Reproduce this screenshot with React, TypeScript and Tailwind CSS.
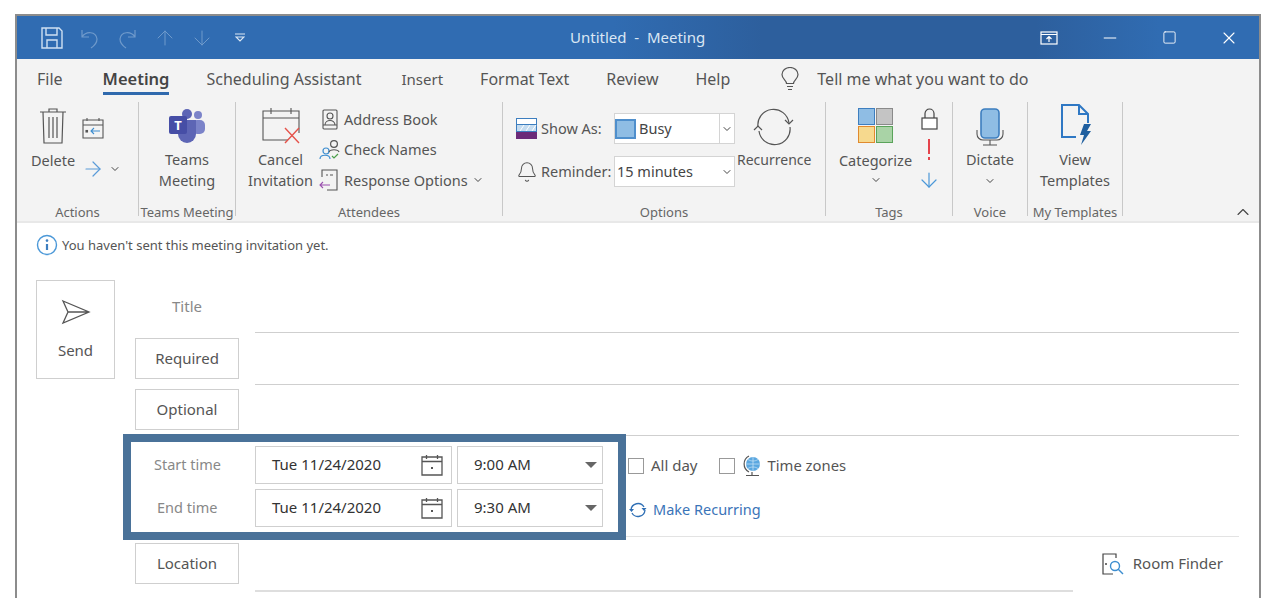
import { ChevronDown, ChevronUp, Bell, X, Minus, Square, ArrowUp, ArrowDown, ArrowRight } from 'lucide-react';

const font = 'font-["Noto_Sans","Liberation_Sans",sans-serif]';

function GroupLabel({ children }: { children: string }) {
  return <div className="absolute -bottom-[5px] left-0 right-0 text-center text-[13px] leading-[18px] text-[#666]">{children}</div>;
}

function SmallChevron({ className = '' }: { className?: string }) {
  return <ChevronDown className={`h-3 w-3 shrink-0 text-[#444] ${className}`} strokeWidth={2} />;
}

function Group({ width, label, children }: { width: string; label: string; children: React.ReactNode }) {
  return (
    <div className={`relative h-full shrink-0 border-r border-[#c8c8c8] ${width}`}>
      {children}
      <GroupLabel>{label}</GroupLabel>
    </div>
  );
}

function BoxButton({ children }: { children: string }) {
  return (
    <button className="flex h-[41px] w-[104px] shrink-0 items-center justify-center border border-[#cfcfcf] bg-white text-[15px] text-[#555]">
      {children}
    </button>
  );
}

function DateTime({ date, time }: { date: string; time: string }) {
  return (
    <div className="flex gap-[5px]">
      <div className="flex h-[38px] w-[197px] items-center justify-between border border-[#cfcfcf] pl-[16px] pr-[8px] text-[15px] text-[#333]">
        {date}
        <svg width="22" height="22" viewBox="0 0 22 22" fill="none" stroke="#555" strokeWidth="1.3">
          <path d="M1 3h20v18H1zM1 7.500h20M5.500 1v4M16.500 1v4" />
          <rect x="10" y="13" width="2" height="2" fill="#555" stroke="none" />
        </svg>
      </div>
      <div className="flex h-[38px] w-[146px] items-center justify-between border border-[#cfcfcf] pl-[16px] pr-[5px] text-[15px] text-[#333]">
        {time}
        <span className="h-0 w-0 border-x-[6px] border-t-[6px] border-x-transparent border-t-[#666]" />
      </div>
    </div>
  );
}

export default function App() {
  return (
    <div className={`${font} h-[610px] w-[1272px] overflow-hidden bg-white pt-[14px] pl-[15px] pr-[11px]`}>
      <div className="flex h-[584px] flex-col overflow-hidden border-x-2 border-t-2 border-[#8c8c8c]">
        {/* title bar */}
        <div className="relative flex h-[43px] shrink-0 items-center bg-[linear-gradient(90deg,#306cb2_0%,#306cb2_48%,#2d5f9d_60%,#2d5f9d_82%,#306cb2_92%)] pl-[24px] pr-[20px] text-white">
          <div className="flex items-center">
            <svg width="22" height="22" viewBox="0 0 22 22" fill="none" stroke="#cfe0f2" strokeWidth="1.4">
              <path d="M1 1h17l3 3v17H1z" /><path d="M5 1v7h11V1M6 21v-8h10v8" />
            </svg>
            <svg width="22" height="22" viewBox="0 0 22 22" fill="none" stroke="#6f9acb" strokeWidth="1.2" className="ml-[16px]">
              <path d="M3 3v7h7M3 10c4-6 14-6 15 2 0 4-3 7-6 9" />
            </svg>
            <svg width="22" height="22" viewBox="0 0 22 22" fill="none" stroke="#6f9acb" strokeWidth="1.2" className="ml-[15px]">
              <path d="M19 3v7h-7M19 10c-4-6-14-6-15 2 0 4 3 7 6 9" />
            </svg>
            <ArrowUp className="ml-[15px] h-6 w-6 text-[#6f9acb]" strokeWidth={1} />
            <ArrowDown className="ml-[13px] h-6 w-6 text-[#6f9acb]" strokeWidth={1} />
            <svg width="10" height="9" viewBox="0 0 10 9" className="ml-[21px]" fill="none" stroke="#dbe7f4" strokeWidth="1.2"><path d="M0 1h10M1 4h8L5 8z" /></svg>
          </div>
          <div className="absolute left-[553px] text-[15px] text-[#dbe7f4]">Untitled&nbsp; -&nbsp; Meeting</div>
          <div className="ml-auto flex items-center gap-[42px]">
            <svg width="18" height="14" viewBox="0 0 18 14" fill="none" stroke="#fff" strokeWidth="1.2"><rect x="1" y="1" width="16" height="12" /><path d="M1 3.500h16M9 11V6M6.500 8 9 5.500 11.500 8" /></svg>
            <Minus className="h-5 w-5" strokeWidth={1.2} />
            <Square className="h-[15px] w-[15px]" strokeWidth={1.4} />
            <X className="h-5 w-5" strokeWidth={1.3} />
          </div>
        </div>

        {/* tabs */}
        <div className="flex h-[43px] shrink-0 items-start gap-[37px] bg-[#f3f3f3] pl-[20px] pt-[8px] text-[16px] leading-[24px] text-[#555]">
          <span className="mr-[3px]">File</span>
          <span className="relative text-[16.500px] font-semibold text-[#444]">
            Meeting
            <span className="absolute -bottom-[4px] left-0 right-0 h-[3px] bg-[#2f69ad]" />
          </span>
          <span className="mr-[3px]">Scheduling Assistant</span>
          <span className="text-[15px]">Insert</span>
          <span>Format Text</span>
          <span>Review</span>
          <span>Help</span>
          <span className="flex items-center gap-[17px] pl-[13px]">
            <svg width="20" height="24" viewBox="0 0 20 24" fill="none" stroke="#555" strokeWidth="1.2">
              <path d="M6.500 16.500c0-3-4.500-4.500-4.500-9a8 7 0 0 1 16 0c0 4.500-4.500 6-4.500 9zM7 19.500h6M8 22.500h4" />
            </svg>
            Tell me what you want to do
          </span>
        </div>

        {/* ribbon */}
        <div className="flex h-[119px] shrink-0 bg-[#f3f3f3] pb-[5px] text-[14.500px] leading-[21px] text-[#555]">
          <Group width="w-[122px]" label="Actions">
            <div className="flex pl-[14px] pt-[5px]">
              <div className="flex flex-col items-center">
                <svg width="28" height="38" viewBox="0 0 28 38" fill="none" stroke="#555" strokeWidth="1.200"><path d="M1 5h26M10 5V2h8v3M4 5l1 31h18l1-31M10 10v21M14 10v21M18 10v21" /></svg>
                <span className="mt-[5px]">Delete</span>
              </div>
              <div className="ml-[7px] mt-[10px]">
                <svg width="22" height="22" viewBox="0 0 22 22" fill="none" stroke="#555" strokeWidth="1.100"><path d="M1 3h20v18H1zM1 8h20M5 1v3M17 1v3" /><path d="M18 14H9M12 11l-3 3 3 3" stroke="#3e8ed0" /><rect x="4" y="13.500" width="1.500" height="1.500" fill="#555" /></svg>
                <div className="-ml-[1px] mt-[18px] flex items-center gap-[4px]">
                  <ArrowRight className="h-6 w-6 text-[#5a9bd8]" strokeWidth={1.2} />
                  <SmallChevron />
                </div>
              </div>
            </div>
          </Group>
          <Group width="w-[97px]" label="Teams Meeting">
            <div className="flex flex-col items-center">
              <svg width="38" height="36" viewBox="0 0 38 36" className="mt-[6px]">
                <circle cx="30" cy="7" r="4" fill="#7b83c9" /><rect x="24" y="12" width="13" height="14" rx="5" fill="#7b83c9" />
                <circle cx="19" cy="6" r="5" fill="#5d65b5" /><path d="M10 12h18v14a9 9 0 0 1-18 0z" fill="#5d65b5" />
                <rect x="1" y="8" width="18" height="18" rx="2" fill="#464ea6" />
                <text x="10" y="22" fontSize="13" fontWeight="700" fill="#fff" textAnchor="middle">T</text>
              </svg>
              <div className="mt-[5px] text-center">Teams<br />Meeting</div>
            </div>
          </Group>
          <Group width="w-[267px]" label="Attendees">
            <div className="flex pl-[12px]">
              <div className="flex flex-col items-center">
                <svg width="40" height="38" viewBox="0 0 40 38" fill="none" stroke="#555" strokeWidth="1.100" className="mt-[4px]">
                  <path d="M27 34H2V5h36v22M2 12h36M10 2v6M30 2v6" />
                  <path d="M24 22l14 15M38 22 24 37" stroke="#e5534b" strokeWidth="1.400" />
                </svg>
                <div className="mt-[5px] text-center">Cancel<br />Invitation</div>
              </div>
              <div className="ml-[6px] flex flex-col gap-[9px] pt-[7px]">
                <div className="flex items-center gap-[6px] pl-[3px]">
                  <svg width="16" height="21" viewBox="0 0 16 21" fill="none" stroke="#555" strokeWidth="1.100"><rect x="1" y="1" width="14" height="19" rx="1" /><circle cx="8" cy="7" r="3" /><path d="M3 16c0-6 10-6 10 0M1 16h14" /></svg>
                  Address Book
                </div>
                <div className="flex items-center gap-[3px]">
                  <svg width="22" height="21" viewBox="0 0 22 21" fill="none" strokeWidth="1.200"><circle cx="7" cy="12" r="3" stroke="#3e8ed0" /><path d="M1 20c0-5 10-5 10 0" stroke="#3e8ed0" /><circle cx="15" cy="5" r="3.400" stroke="#555" /><path d="M10 13c1-3 9-3 10 0" stroke="#555" /><path d="M13 17l2 2 4-4" stroke="#4da04d" /></svg>
                  Check Names
                </div>
                <div className="flex items-center gap-[5px]">
                  <svg width="20" height="22" viewBox="0 0 20 22" fill="none" strokeWidth="1.100"><path d="M3 8V1h15v20H8" stroke="#555" /><path d="M7 6h2M11 6h3" stroke="#555" /><path d="M11 16H1M4 13l-3 3 3 3" stroke="#9a4fae" /></svg>
                  <span className="flex items-center gap-[4px]">Response Options <SmallChevron /></span>
                </div>
              </div>
            </div>
          </Group>
          <Group width="w-[323px]" label="Options">
            <div className="flex pl-[13px] pt-[11px]">
              <div className="flex flex-col gap-[12px]">
                <div className="flex h-[31px] items-center">
                  <svg width="21" height="21" viewBox="0 0 21 21" className="mr-[4px]">
                    <rect width="21" height="21" fill="#3d7ebf" /><rect x="1" y="1" width="19" height="5" fill="#fff" /><rect x="1" y="7" width="19" height="6" fill="#c5dcf0" /><path d="M4 13l4-6M10 13l4-6M16 13l4-6" stroke="#fff" /><rect y="14" width="21" height="7" fill="#6b2a78" />
                  </svg>
                  <span className="w-[73px]">Show As:</span>
                  <div className="flex h-[31px] w-[121px] items-center border border-[#d4d4d4] bg-white text-[#444]">
                    <span className="mr-[3px] h-[20px] w-[21px] border-2 border-[#4f8fcc] bg-[#8fbde4]" />
                    <span className="flex-1">Busy</span>
                    <span className="flex h-full w-[15px] items-center justify-center border-l border-[#d4d4d4]"><SmallChevron /></span>
                  </div>
                </div>
                <div className="flex h-[31px] items-center">
                  <Bell className="mr-[3px] h-[22px] w-[22px]" strokeWidth={1.1} />
                  <span className="w-[73px]">Reminder:</span>
                  <div className="flex h-[31px] w-[121px] items-center justify-between border border-[#d4d4d4] bg-white pl-[2px] pr-[1px] text-[#444]">
                    15 minutes
                    <SmallChevron />
                  </div>
                </div>
              </div>
              <div className="-mt-[5px] flex flex-col items-center pl-[2px]">
                <svg width="42" height="38" viewBox="0 0 42 38" fill="none" stroke="#555" strokeWidth="1.200">
                  <path d="M5 19A15.500 15.500 0 0 1 36 15M37 19A15.500 15.500 0 0 1 6 23" /><path d="M32 12l4 4 4-4M1 22l4-4 4 4" />
                </svg>
                <span className="mt-[3px] whitespace-nowrap text-[14px]">Recurrence</span>
              </div>
            </div>
          </Group>
          <Group width="w-[127px]" label="Tags">
            <div className="flex pl-[12px] pt-[6px]">
              <div className="flex w-[75px] flex-col items-center">
                <div className="grid grid-cols-2 gap-[1px]">
                  <span className="h-[17px] w-[17px] border border-[#3d7ebf] bg-[#8fbde4]" />
                  <span className="h-[17px] w-[17px] border border-[#8a8a8a] bg-[#c4c4c4]" />
                  <span className="h-[17px] w-[17px] border border-[#e08a2e] bg-[#f6d98e]" />
                  <span className="h-[17px] w-[17px] border border-[#5aa35a] bg-[#a9d3a6]" />
                </div>
                <span className="mt-[7px]">Categorize</span>
                <SmallChevron className="mt-[3px]" />
              </div>
              <div className="flex flex-col items-center pl-[4px]">
                <svg width="17" height="22" viewBox="0 0 17 22" fill="none" stroke="#444" strokeWidth="1.200">
                  <path d="M4 10V5.500a4.500 4.500 0 0 1 9 0V10" /><rect x="1" y="10" width="15" height="11" fill="#fff" />
                </svg>
                <span className="mt-[9px] h-[21px] w-[2px] bg-[linear-gradient(180deg,#e5434b_0%,#e5434b_70%,transparent_70%,transparent_85%,#e5434b_85%)]" />
                <ArrowDown className="mt-[8px] h-6 w-6 text-[#4b98d8]" strokeWidth={1.2} />
              </div>
            </div>
          </Group>
          <Group width="w-[75px]" label="Voice">
            <div className="flex flex-col items-center pt-[6px]">
              <svg width="28" height="38" viewBox="0 0 28 38" fill="none">
                <rect x="5" y="1" width="18" height="29" rx="4" fill="#8fbde4" stroke="#3d7ebf" strokeWidth="1.600" />
                <path d="M1 22v4a6 6 0 0 0 6 6h14a6 6 0 0 0 6-6v-4M14 32v5M7 37h14" stroke="#555" strokeWidth="1.100" />
              </svg>
              <span className="mt-[3px]">Dictate</span>
              <SmallChevron className="mt-[5px]" />
            </div>
          </Group>
          <Group width="w-[95px]" label="My Templates">
            <div className="flex flex-col items-center pt-[2px]">
              <svg width="32" height="42" viewBox="0 0 32 42" fill="none" className="ml-[2px]">
                <path d="M16 33H2V1h17l9 9v9M19 1v9h9" stroke="#2f78c4" strokeWidth="2" />
                <path d="M24 20h7l-4 7h4l-10 14 3-10h-4z" fill="#1f5f9f" />
              </svg>
              <div className="mt-[3px] text-center">View<br />Templates</div>
            </div>
          </Group>
          <div className="-mb-[6px] flex flex-1 items-end justify-end pr-[6px]">
            <ChevronUp className="h-5 w-5 text-[#444]" strokeWidth={1.3} />
          </div>
        </div>

        {/* form */}
        <div className="flex-1 border-t-2 border-[#e8e8e8] bg-white text-[15px] leading-[21px]">
          <div className="flex h-[57px] items-start gap-[4px] pl-[19px] pt-[11px] text-[13px] leading-[22px] text-[#555]">
            <svg width="22" height="22" viewBox="0 0 22 22" fill="none"><circle cx="11" cy="11" r="9.500" stroke="#4b98d8" strokeWidth="1.400" /><path d="M11 10v6" stroke="#3d7ebf" strokeWidth="2.200" /><circle cx="11" cy="6.600" r="1.300" fill="#3d7ebf" /></svg>
            You haven't sent this meeting invitation yet.
          </div>

          <div className="flex pl-[19px] pr-[20px]">
            <div className="flex h-[99px] w-[79px] shrink-0 flex-col items-center border border-[#cfcfcf] pt-[18px] text-[#555]">
              <svg width="30" height="26" viewBox="0 0 30 26" fill="none" stroke="#555" strokeWidth="1.300"><path d="M2 2l26 11L2 24l5-11zM7 13h21" /></svg>
              <span className="mt-[15px]">Send</span>
            </div>

            <div className="ml-[20px] flex-1">
              <div className="flex h-[53px] gap-[16px]">
                <div className="w-[104px] pt-[16px] text-center text-[#888]">Title</div>
                <div className="flex-1 border-b border-[#cfcfcf]" />
              </div>
              <div className="flex h-[52px] gap-[16px] pt-[5px]">
                <BoxButton>Required</BoxButton>
                <div className="flex-1 border-b border-[#cfcfcf]" />
              </div>
              <div className="flex h-[51px] gap-[16px] pt-[4px]">
                <BoxButton>Optional</BoxButton>
                <div className="flex-1 border-b border-[#cfcfcf]" />
              </div>
            </div>
          </div>

          <div className="flex pl-[106px] pr-[20px]">
            <div className="relative z-10 -mb-[3px] -mt-[2px] flex h-[106px] w-[503px] shrink-0 flex-col justify-center gap-[5px] border-[8px] border-[#4a7299] bg-white pb-[2px]">
              <div className="flex items-center">
                <span className="w-[124px] pl-[23px] text-[14.500px] text-[#888]">Start time</span>
                <DateTime date="Tue 11/24/2020" time="9:00 AM" />
              </div>
              <div className="flex items-center">
                <span className="w-[124px] pl-[26px] text-[14.500px] text-[#888]">End time</span>
                <DateTime date="Tue 11/24/2020" time="9:30 AM" />
              </div>
            </div>
            <div className="flex h-[101px] flex-1 flex-col gap-[21px] border-b border-[#e3e3e3] pl-[2px] pt-[18px] text-[#555]">
              <div className="flex h-[23px] items-center">
                <span className="h-[16px] w-[16px] border border-[#999]" />
                <span className="ml-[7px]">All day</span>
                <span className="ml-[21px] h-[16px] w-[16px] border border-[#999]" />
                <svg width="18" height="22" viewBox="0 0 18 22" fill="none" className="ml-[8px]">
                  <circle cx="10" cy="9" r="7" fill="#5aa7e0" /><path d="M3 9h14M10 2v14M5 4.500c3 2 7 2 10 0M5 13.500c3-2 7-2 10 0" stroke="#cfe6f7" strokeWidth=".7" /><path d="M6 1a9 9 0 0 0 0 16M3 20.500h13M9 17v3" stroke="#555" strokeWidth="1.200" />
                </svg>
                <span className="ml-[7px] text-[14.800px]">Time zones</span>
              </div>
              <div className="flex h-[23px] items-center gap-[5px] text-[14.500px] text-[#3b74b8]">
                <svg width="20" height="18" viewBox="0 0 20 18" fill="none" stroke="#2f6fb5" strokeWidth="1.300"><path d="M3 9a7 7 0 0 1 13-3M17 9a7 7 0 0 1-13 3" /><path d="M13.500 7h5L16 10zM1 8h5l-2.500 3z" fill="#2f6fb5" stroke="none" /></svg>
                Make Recurring
              </div>
            </div>
          </div>

          <div className="flex h-[55px] pl-[118px] pr-[20px] pt-[6px]">
            <BoxButton>Location</BoxButton>
            <div className="ml-[16px] w-[818px] border-b-2 border-[#dedede]" />
            <div className="flex h-[41px] flex-1 items-center justify-end pr-[16px] text-[#555]">
              <svg width="23" height="24" viewBox="0 0 23 24" fill="none" className="mr-[9px]"><path d="M15 6V2H2v20h10" stroke="#444" strokeWidth="1.200" /><circle cx="5" cy="12" r="1" fill="#444" /><circle cx="14" cy="14" r="4.500" stroke="#3d8ed0" strokeWidth="1.400" /><path d="M17 17l5 5" stroke="#3d8ed0" strokeWidth="1.400" /></svg>
              Room Finder
            </div>
          </div>
        </div>
      </div>
    </div>
  );
}
